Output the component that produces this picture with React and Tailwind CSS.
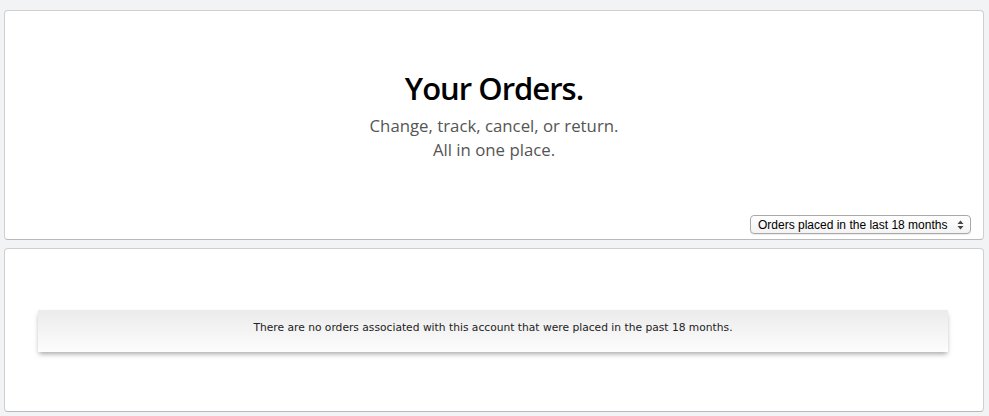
export default function App() {
  return (
    <div className="min-h-[416px] bg-[#f2f3f5] pt-[10px] pl-[4px] pr-[5px] pb-[4px] font-['Liberation_Sans',Arial,sans-serif]">
      <div className="flex h-[230px] flex-col rounded-[4px] border border-[#cfcfcf] border-b-[#b9b9b9] bg-white">
        <div className="flex flex-1 flex-col items-center pt-[57px]">
          <h1 className="font-['Open_Sans',sans-serif] text-[31px] font-semibold leading-[40px] tracking-[-1px] text-black">
            Your Orders.
          </h1>
          <p className="mt-[6px] text-center font-['Open_Sans',sans-serif] text-[16.8px] leading-[24px] text-[#555]">
            Change, track, cancel, or return.
            <br />
            All in one place.
          </p>
        </div>
        <div className="flex justify-end pr-[12px] pb-[5px]">
          <div className="flex h-[19px] w-[221px] items-center justify-between rounded-[4px] border border-[#a9a9a9] bg-gradient-to-b from-white to-[#f3f3f3] pl-[7px] pr-[6px] text-[12px] text-black shadow-[0_1px_1px_rgba(0,0,0,0.08)]">
            <span>Orders placed in the last 18 months</span>
            <svg width="7" height="10" viewBox="0 0 7 10">
              <path d="M0.5 4 L3.5 0.5 L6.5 4 Z" fill="#444" />
              <path d="M0.5 6 L3.5 9.5 L6.5 6 Z" fill="#444" />
            </svg>
          </div>
        </div>
      </div>

      <div className="mt-[8px] h-[164px] rounded-[4px] border border-[#cfcfcf] border-b-[#b9b9b9] bg-white pt-[61px] pl-[33px] pr-[35px]">
        <div className="flex h-[42px] items-center justify-center bg-gradient-to-b from-[#ebebeb] to-[#fdfdfd] pb-[6px] font-['DejaVu_Sans',sans-serif] text-[10.7px] text-[#222] shadow-[0_3px_5px_-1px_rgba(0,0,0,0.35)]">
          There are no orders associated with this account that were placed in the past 18 months.
        </div>
      </div>
    </div>
  )
}
